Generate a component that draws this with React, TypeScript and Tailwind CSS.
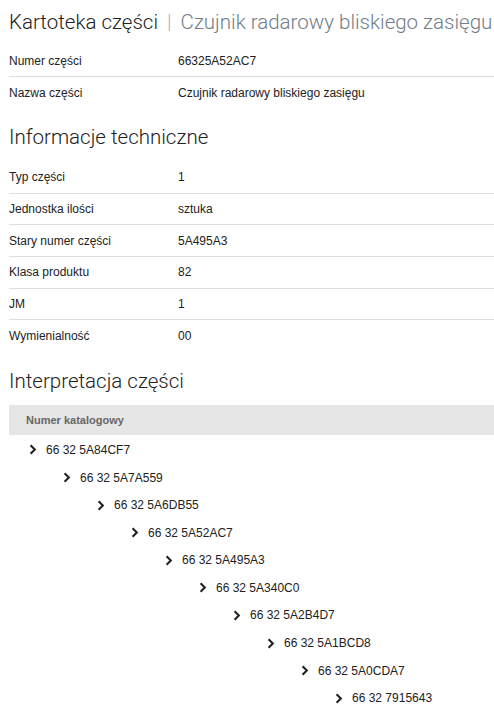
import React from 'react';

const basic = [
  { label: 'Numer części', value: '66325A52AC7' },
  { label: 'Nazwa części', value: 'Czujnik radarowy bliskiego zasięgu' },
];

const tech = [
  { label: 'Typ części', value: '1' },
  { label: 'Jednostka ilości', value: 'sztuka' },
  { label: 'Stary numer części', value: '5A495A3' },
  { label: 'Klasa produktu', value: '82' },
  { label: 'JM', value: '1' },
  { label: 'Wymienialność', value: '00' },
];

const tree = [
  '66 32 5A84CF7',
  '66 32 5A7A559',
  '66 32 5A6DB55',
  '66 32 5A52AC7',
  '66 32 5A495A3',
  '66 32 5A340C0',
  '66 32 5A2B4D7',
  '66 32 5A1BCD8',
  '66 32 5A0CDA7',
  '66 32 7915643',
];

const Chevron = () => (
  <svg width="8" height="11" viewBox="0 0 8 11" className="shrink-0">
    <path d="M1.6 1.3 L5.8 5.5 L1.6 9.7" fill="none" stroke="#222" strokeWidth="2.1" />
  </svg>
);

const InfoRows: React.FC<{ rows: { label: string; value: string }[]; rowClass: string }> = ({ rows, rowClass }) => (
  <div className="divide-y divide-[#dedede]">
    {rows.map(r => (
      <div key={r.label} className={`flex items-center ${rowClass}`}>
        <span className="w-[169px] shrink-0">{r.label}</span>
        <span>{r.value}</span>
      </div>
    ))}
  </div>
);

export default function App() {
  return (
    <div className="min-h-screen bg-white overflow-hidden text-[12px] text-[#222] font-['Liberation_Sans',Arial,sans-serif]">
      <div className="pl-[9px]">
        <h1 className="pt-[9px] text-[20.5px] leading-[26px] font-light whitespace-nowrap font-['Roboto',sans-serif]">
          Kartoteka części
          <span className="text-[#a9b0b7] px-[9px]">|</span>
          <span className="text-[#717c88]">Czujnik radarowy bliskiego zasięgu</span>
        </h1>

        <div className="mt-[10px]">
          <InfoRows rows={basic} rowClass="h-[32px]" />
        </div>

        <h2 className="mt-[15px] text-[20.5px] leading-[26px] font-light font-['Roboto',sans-serif]">
          Informacje techniczne
        </h2>

        <div className="mt-[12px]">
          <InfoRows rows={tech} rowClass="h-[31.7px]" />
        </div>

        <h2 className="mt-[16px] text-[20.5px] leading-[26px] font-light font-['Roboto',sans-serif]">
          Interpretacja części
        </h2>

        <div className="mt-[11px] h-[30px] bg-[#e6e6e6] flex items-center pl-[17px] text-[11px] font-bold text-[#666]">
          Numer katalogowy
        </div>

        <div className="pt-[1px]">
          {tree.map((code, i) => (
            <div
              key={code}
              className="h-[27.6px] flex items-center gap-[9px]"
              style={{ paddingLeft: 20 + i * 34 }}
            >
              <Chevron />
              <span>{code}</span>
            </div>
          ))}
        </div>
      </div>
    </div>
  );
}
